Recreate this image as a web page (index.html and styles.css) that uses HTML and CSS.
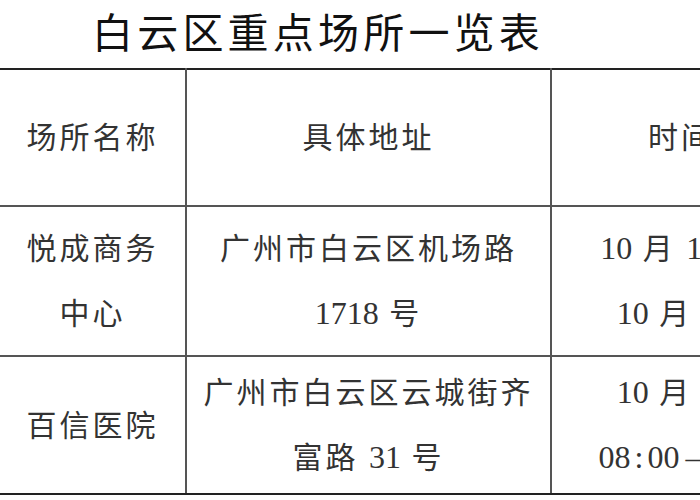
FILE: index.html
```html
<!DOCTYPE html>
<html lang="zh-CN">
<head>
<meta charset="utf-8">
<title>白云区重点场所一览表</title>
<link rel="stylesheet" href="styles.css">
</head>
<body>
<div class="page">
  <h1 class="title">白云区重点场所一览表</h1>
  <table class="sites">
    <colgroup>
      <col class="c-name">
      <col class="c-addr">
      <col class="c-time">
    </colgroup>
    <tr class="r-head">
      <td>场所名称</td>
      <td>具体地址</td>
      <td>时间段</td>
    </tr>
    <tr class="r-one">
      <td>悦成商务<br>中心</td>
      <td>广州市白云区机场路<br><span class="num">1718</span> 号</td>
      <td><span class="num">10</span> 月 <span class="num">16</span> 日至<br><span class="num">10</span> 月 <span class="num">17</span> 日</td>
    </tr>
    <tr class="r-two">
      <td>百信医院</td>
      <td>广州市白云区云城街齐<br>富路 <span class="num">31</span> 号</td>
      <td><span class="num">10</span> 月 <span class="num">17</span> 日<br><span class="num">08</span><span class="colon">:</span><span class="num">00</span><span class="dash">—</span><span class="num">20</span><span class="colon">:</span><span class="num">00</span></td>
    </tr>
  </table>
</div>
</body>
</html>
```
FILE: styles.css
```css
html, body {
  margin: 0;
  padding: 0;
  background: #ffffff;
}

.page {
  width: 700px;
  height: 500px;
  overflow: hidden;
  font-family: "Liberation Serif", "Noto Sans CJK SC", serif;
}

.title {
  margin: 0 0 7px 0;
  padding-left: 92px;
  height: 61px;
  line-height: 61px;
  font-family: "Noto Sans CJK SC", sans-serif;
  font-size: 41px;
  font-weight: 400;
  letter-spacing: 4.2px;
  color: #111111;
  white-space: nowrap;
}

.sites {
  border-collapse: collapse;
  table-layout: fixed;
  width: 845px;
  margin-left: -2px;
  font-size: 30px;
  letter-spacing: 3px;
  color: #333333;
}

.c-name { width: 187px; }
.c-addr { width: 365px; }
.c-time { width: 293px; }

.sites td {
  border: 2px solid #555555;
  padding: 0;
  text-align: center;
  vertical-align: middle;
  line-height: 65px;
  white-space: nowrap;
}

.r-head td { border-top-color: #222222; }
.r-two td { border-bottom-color: #222222; }

.r-head { height: 137px; }
.r-one { height: 150px; }
.r-two { height: 138px; }

.num {
  font-size: 32px;
  letter-spacing: 0;
}

.colon {
  font-size: 32px;
  letter-spacing: 0;
  margin: 0 4px;
}

.dash {
  letter-spacing: 0;
  margin-left: 6px;
}
```
